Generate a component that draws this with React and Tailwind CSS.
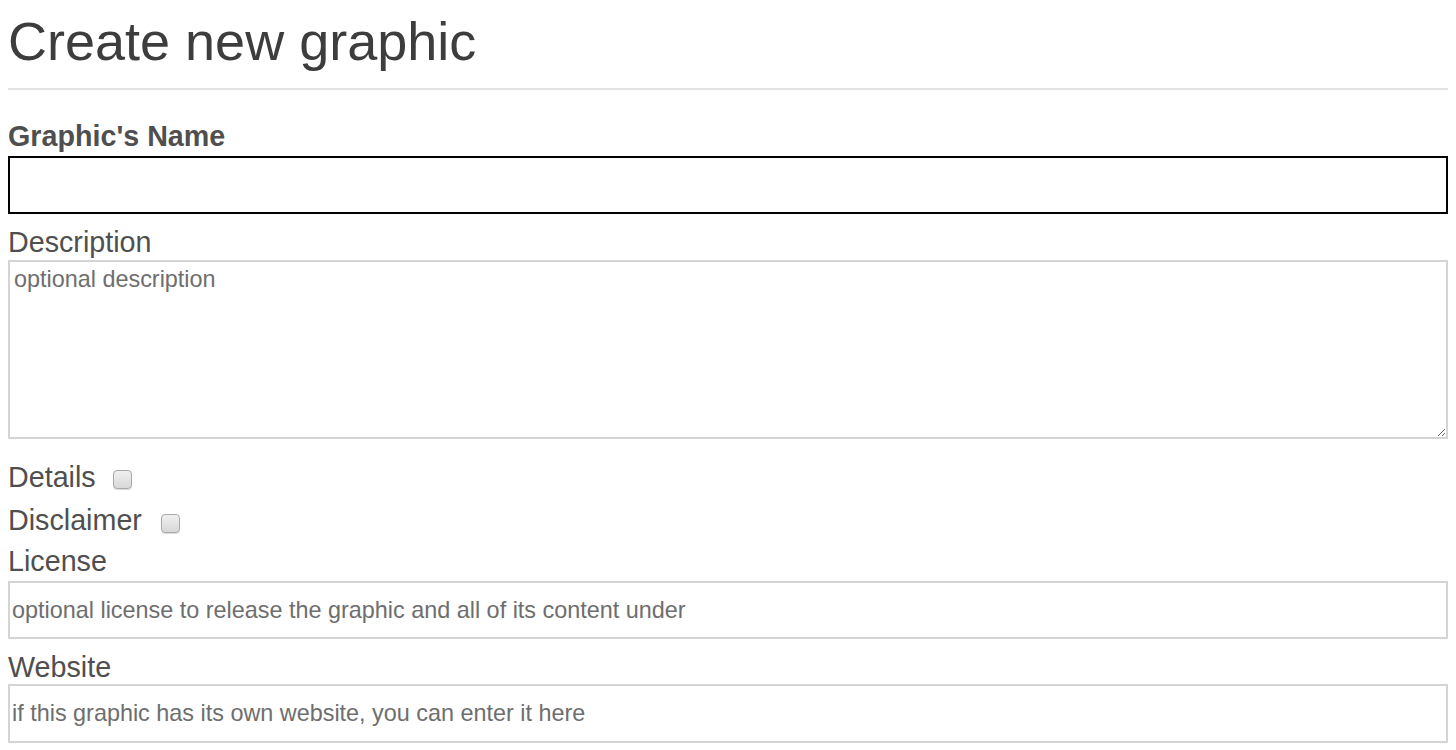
export default function App() {
  return (
    <div className="px-2 font-['Liberation_Sans',Arial,sans-serif] bg-white min-h-[750px]">
      <h1 className="text-[54px] leading-[60px] pt-[11px] text-[#3d3d3d] font-normal">Create new graphic</h1>
      <div className="mt-[17px] h-[2px] bg-[#e2e2e2]" />
      <label className="block mt-[30px] text-[28.7px] leading-8 font-bold text-[#4f4f4f]">Graphic's Name</label>
      <input
        type="text"
        className="block mt-1 w-full h-[58px] border-2 border-black bg-white outline-none px-[2px] text-[23.4px] text-[#333]"
      />
      <label className="block mt-[12px] text-[28.7px] leading-8 text-[#4f4f4f]">Description</label>
      <textarea
        placeholder="optional description"
        className="block mt-[2px] w-full h-[179px] border-2 border-[#d4d4d4] bg-white outline-none px-[4px] pt-[3px] text-[23.4px] leading-[28px] text-[#333] placeholder:text-[#6e6e6e]"
      />
      <div className="mt-[22px] flex gap-[17px]">
        <span className="text-[28.7px] leading-8 text-[#4f4f4f]">Details</span>
        <span className="mt-[9px] w-[19px] h-[19px] rounded-[4px] border border-[#a8a8a8] bg-gradient-to-b from-[#f0f0f0] to-[#d8d8d8] shadow-[0_1px_1px_rgba(0,0,0,0.15)]" />
      </div>
      <div className="mt-[11px] flex gap-[19px]">
        <span className="text-[28.7px] leading-8 text-[#4f4f4f]">Disclaimer</span>
        <span className="mt-[10px] w-[19px] h-[19px] rounded-[4px] border border-[#a8a8a8] bg-gradient-to-b from-[#f0f0f0] to-[#d8d8d8] shadow-[0_1px_1px_rgba(0,0,0,0.15)]" />
      </div>
      <label className="block mt-[9px] text-[28.7px] leading-8 text-[#4f4f4f]">License</label>
      <input
        type="text"
        placeholder="optional license to release the graphic and all of its content under"
        className="block mt-1 w-full h-[58px] border-2 border-[#d4d4d4] bg-white outline-none px-[2px] text-[23.4px] text-[#333] placeholder:text-[#6e6e6e]"
      />
      <label className="block mt-[12px] text-[28.7px] leading-8 text-[#4f4f4f]">Website</label>
      <input
        type="text"
        placeholder="if this graphic has its own website, you can enter it here"
        className="block mt-[1px] w-full h-[59px] border-2 border-[#d4d4d4] bg-white outline-none px-[2px] text-[23.4px] text-[#333] placeholder:text-[#6e6e6e]"
      />
    </div>
  );
}
